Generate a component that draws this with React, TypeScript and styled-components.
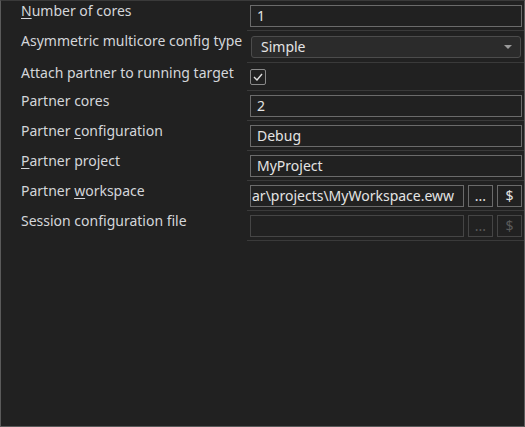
import styled, { createGlobalStyle } from 'styled-components';

//== global ==//
const GlobalStyle = createGlobalStyle`
    html, body {
        margin: 0;
        padding: 0;
        background: #212121;
    }
    body {
        font-family: "Noto Sans", "Open Sans", sans-serif;
        font-size: 14px;
    }
`;

//== style ==//
const Frame = styled.div`
    box-sizing: border-box;
    width: 525px;
    height: 427px;
    background: #212121;
    border: 1px solid #5a5a5a;
    border-top-color: #3a3a3a;
    display: flex;
    flex-direction: column;
`;

const Row = styled.div<{ $h: number }>`
    display: flex;
    height: ${props => props.$h}px;
`;

const Label = styled.div`
    width: 226px;
    flex: none;
    padding: 0 0 0 20px;
    color: #d4d6da;
    line-height: 20px;
    white-space: nowrap;

    u {
        text-decoration: underline;
        text-underline-offset: 2px;
    }
`;

const Value = styled.div`
    flex: 1;
    display: flex;
    align-items: flex-start;
    gap: 4px;
    padding: 4px 2px 0 3px;
    border-bottom: 1px solid #3a3a3a;
`;

const Field = styled.div<{ $disabled?: boolean }>`
    box-sizing: border-box;
    flex: 1;
    height: 22px;
    border: 1px solid ${props => props.$disabled ? '#454545' : '#6b6b6b'};
    color: #e4e4e4;
    padding: 0 6px;
    line-height: 19px;
    overflow: hidden;
    white-space: nowrap;
`;

const PathField = styled(Field)`
    padding: 0 1px;
`;

const Select = styled.div`
    box-sizing: border-box;
    flex: 1;
    height: 22px;
    margin: 1px 1px 0 1px;
    border: 1px solid #4c4c4c;
    border-radius: 3px;
    background: #2b2b2b;
    color: #e4e4e4;
    padding: 0 8px 0 9px;
    line-height: 20px;
    display: flex;
    align-items: center;
    justify-content: space-between;
`;

const Arrow = styled.span`
    width: 0;
    height: 0;
    border-left: 4px solid transparent;
    border-right: 4px solid transparent;
    border-top: 4px solid #9a9a9a;
`;

const Check = styled.div`
    box-sizing: border-box;
    width: 16px;
    height: 16px;
    margin-top: 2px;
    border: 1px solid #8a8a8a;
    border-radius: 2px;
    display: flex;
    align-items: center;
    justify-content: center;
`;

const SmallButton = styled.div<{ $disabled?: boolean }>`
    box-sizing: border-box;
    width: 25px;
    height: 22px;
    flex: none;
    border: 1px solid ${props => props.$disabled ? '#454545' : '#6b6b6b'};
    color: ${props => props.$disabled ? '#5a5a5a' : '#e4e4e4'};
    display: flex;
    align-items: center;
    justify-content: center;
    line-height: 20px;
`;

//== component ==//
const Buttons = ({ disabled }: { disabled?: boolean }) => (
    <>
        <SmallButton $disabled={disabled}>...</SmallButton>
        <SmallButton $disabled={disabled}>$</SmallButton>
    </>
);

export default function App() {
    return (
        <>
            <GlobalStyle />
            <Frame>
                <Row $h={30}>
                    <Label><u>N</u>umber of cores</Label>
                    <Value><Field>1</Field></Value>
                </Row>
                <Row $h={32}>
                    <Label>Asymmetric multicore config type</Label>
                    <Value>
                        <Select>Simple<Arrow /></Select>
                    </Value>
                </Row>
                <Row $h={28}>
                    <Label>Attach partner to running target</Label>
                    <Value>
                        <Check>
                            <svg width="10" height="8" viewBox="0 0 10 8">
                                <path d="M1 4 L4 7 L9 1" fill="none" stroke="#e0e0e0" strokeWidth="1.4" />
                            </svg>
                        </Check>
                    </Value>
                </Row>
                <Row $h={30}>
                    <Label>Partner cores</Label>
                    <Value><Field>2</Field></Value>
                </Row>
                <Row $h={30}>
                    <Label>Partner <u>c</u>onfiguration</Label>
                    <Value><Field>Debug</Field></Value>
                </Row>
                <Row $h={30}>
                    <Label><u>P</u>artner project</Label>
                    <Value><Field>MyProject</Field></Value>
                </Row>
                <Row $h={30}>
                    <Label>Partner <u>w</u>orkspace</Label>
                    <Value>
                        <PathField>ar\projects\MyWorkspace.eww</PathField>
                        <Buttons />
                    </Value>
                </Row>
                <Row $h={30}>
                    <Label>Session configuration file</Label>
                    <Value>
                        <Field $disabled />
                        <Buttons disabled />
                    </Value>
                </Row>
            </Frame>
        </>
    );
}
